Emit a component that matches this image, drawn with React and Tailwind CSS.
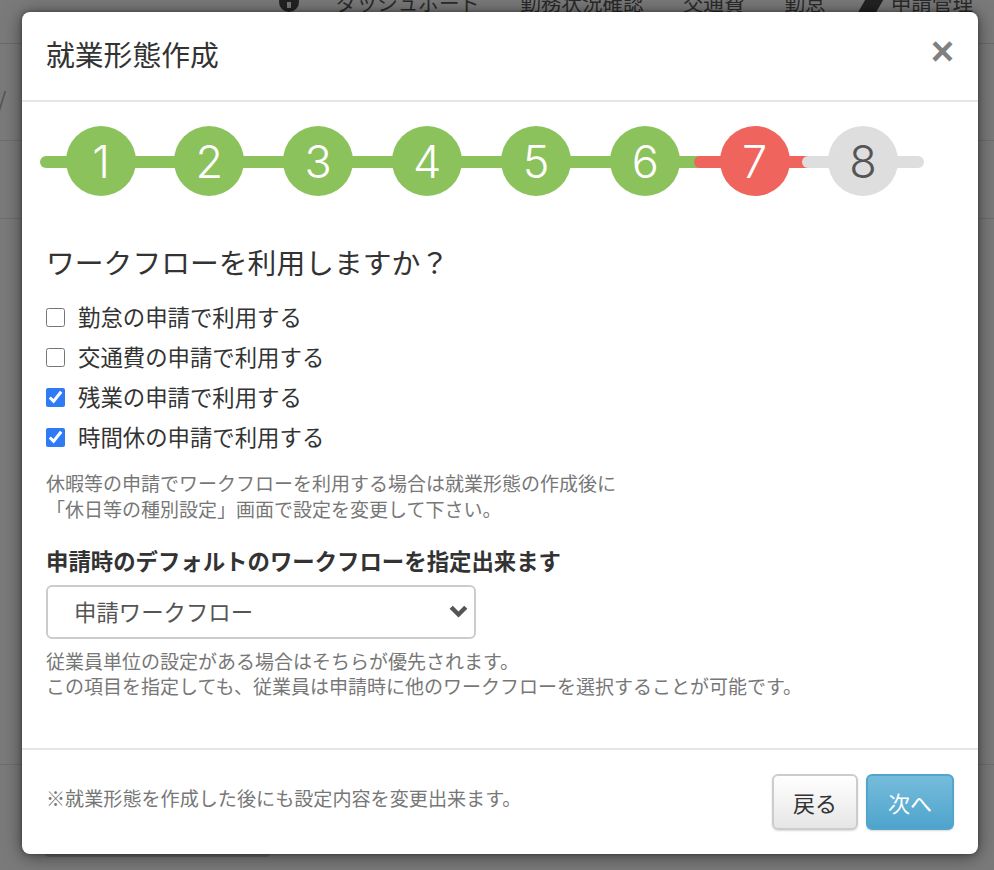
import React from 'react';

const FONT = '"Noto Sans CJK JP", "Noto Sans", sans-serif';

const steps = [
  { n: 1, line: 'bg-[#8cc25c]', circle: 'bg-[#8cc25c] text-white', gap: 'ml-0' },
  { n: 2, line: 'bg-[#8cc25c]', circle: 'bg-[#8cc25c] text-white', gap: '-ml-[13.8px]' },
  { n: 3, line: 'bg-[#8cc25c]', circle: 'bg-[#8cc25c] text-white', gap: '-ml-[13px]' },
  { n: 4, line: 'bg-[#8cc25c]', circle: 'bg-[#8cc25c] text-white', gap: '-ml-[13px]' },
  { n: 5, line: 'bg-[#8cc25c]', circle: 'bg-[#8cc25c] text-white', gap: '-ml-[13px]' },
  { n: 6, line: 'bg-[#8cc25c]', circle: 'bg-[#8cc25c] text-white', gap: '-ml-[13px]' },
  { n: 7, line: 'bg-[#ef645c]', circle: 'bg-[#ef645c] text-white', gap: '-ml-[12.6px]' },
  { n: 8, line: 'bg-[#dedede]', circle: 'bg-[#dedede] text-[#555555]', gap: '-ml-[13.6px]' },
];

const options = [
  { label: '勤怠の申請で利用する', checked: false },
  { label: '交通費の申請で利用する', checked: false },
  { label: '残業の申請で利用する', checked: true },
  { label: '時間休の申請で利用する', checked: true },
];

const Step = ({ n, line, circle, gap }) => (
  <div className={`relative flex h-[70px] w-[122px] shrink-0 items-center justify-center ${gap}`}>
    <div className={`absolute inset-x-0 top-[30px] h-3 rounded-full ${line}`} />
    <div
      className={`relative z-10 flex h-[70px] w-[70px] items-center justify-center rounded-full text-[45px] font-light leading-none ${circle}`}
      style={{ fontFamily: 'Inter, sans-serif' }}
    >
      {n}
    </div>
  </div>
);

const App = () => {
  return (
    <div className="relative h-[870px] w-full overflow-hidden bg-[#7a7a7a]" style={{ fontFamily: FONT }}>
      {/* page behind the dialog */}
      <div className="flex h-[44px] items-start border-b border-[#696969] pl-[279px] text-[20.6px] leading-none text-[#2a2a2a]">
        <div className="-mt-[8px] flex items-center whitespace-nowrap">
          <span className="relative h-[20px] w-[20px] rounded-full bg-[#222222]">
            <span className="absolute bottom-[4px] left-[8px] h-[6px] w-[4px] bg-[#777777]" />
          </span>
          <span className="ml-[37px]">ダッシュボード</span>
          <span className="ml-[40px]">勤務状況確認</span>
          <span className="ml-[39px]">交通費</span>
          <span className="ml-[40px]">勤怠</span>
          <span className="ml-[38px] h-[20px] w-[18px] -skew-x-[30deg] bg-[#222222]" />
          <span className="ml-[9px]">申請管理</span>
        </div>
      </div>
      <div className="-ml-[3px] h-[97px] border-b border-[#6e6e6e] pt-[44px] text-[24px] leading-none text-[#555555]">/</div>
      <div className="h-[78px] border-b border-[#6e6e6e]" />
      <div className="h-[546px] border-b border-[#6e6e6e]" />
      <div className="ml-[45px] mt-[84px] h-[8px] w-[225px] rounded-md bg-[#666666]" />

      {/* dialog */}
      <div className="absolute left-[22px] top-3 flex h-[842px] w-[956px] flex-col rounded-lg bg-white shadow-[0_0_4px_rgba(0,0,0,0.35),0_2px_18px_rgba(0,0,0,0.5)]">
        <div className="flex h-[90px] shrink-0 items-start justify-between border-b-2 border-[#e5e5e5] pl-[24px] pr-[24px]">
          <h1 className="mt-[21px] text-[28.8px] font-normal leading-[42px] text-[#333333]">就業形態作成</h1>
          <span className="mt-[14px] text-[40px] font-bold leading-[50px] text-[#808080]" style={{ fontFamily: '"Liberation Sans", sans-serif' }}>×</span>
        </div>

        <div className="flex-1 pl-[24px]">
          <div className="ml-[-6px] mt-[24px] flex h-[70px]">
            {steps.map((s) => (
              <Step key={s.n} {...s} />
            ))}
          </div>

          <h2 className="mt-[45px] text-[28.8px] font-normal leading-[42px] text-[#333333]">ワークフローを利用しますか？</h2>

          <div className="mt-[14px] flex flex-col">
            {options.map((o) => (
              <label key={o.label} className="flex h-10 items-center text-[22.4px] text-[#333333]">
                <input
                  type="checkbox"
                  defaultChecked={o.checked}
                  className="mr-[13px] h-[19px] w-[19px] accent-[#2f7bf6]"
                />
                {o.label}
              </label>
            ))}
          </div>

          <p className="mt-[13px] text-[19px] leading-[26px] text-[#777777]">
            休暇等の申請でワークフローを利用する場合は就業形態の作成後に
            <br />
            「休日等の種別設定」画面で設定を変更して下さい。
          </p>

          <h3 className="mt-[22px] text-[22.4px] font-bold leading-[32px] text-[#333333]">申請時のデフォルトのワークフローを指定出来ます</h3>

          <div className="relative mt-[9px] w-[430px]">
            <select className="block h-[54px] w-full appearance-none rounded-md border-2 border-[#cccccc] bg-white pl-[26px] text-[22.4px] text-[#555555]">
              <option>申請ワークフロー</option>
            </select>
            <svg className="absolute right-[8px] top-[20px] h-[13px] w-[19px]" viewBox="0 0 19 13" fill="none">
              <path d="M2.2 2.2 9.5 9.5 16.8 2.2" stroke="#555555" strokeWidth="4.4" />
            </svg>
          </div>

          <p className="mt-[9px] text-[19px] leading-[25px] text-[#777777]">
            従業員単位の設定がある場合はそちらが優先されます。
            <br />
            この項目を指定しても、従業員は申請時に他のワークフローを選択することが可能です。
          </p>
        </div>

        <div className="flex h-[106px] shrink-0 items-start justify-between border-t-2 border-[#e5e5e5] pl-[24px] pr-[24px]">
          <p className="mt-[35px] text-[19.1px] leading-[26px] text-[#777777]">※就業形態を作成した後にも設定内容を変更出来ます。</p>
          <div className="mt-[24px] flex gap-2">
            <button className="h-[56px] w-[86px] rounded-md border-2 border-[#cccccc] bg-gradient-to-b from-white to-[#e6e6e6] text-[22px] text-[#333333] shadow-[0_1px_2px_rgba(0,0,0,0.15)]">
              戻る
            </button>
            <button className="h-[56px] w-[88px] rounded-md border-2 border-[#52a6cc] bg-gradient-to-b from-[#75bcdc] to-[#4fa4cc] text-[22px] text-white shadow-[0_1px_2px_rgba(0,0,0,0.15)]">
              次へ
            </button>
          </div>
        </div>
      </div>
    </div>
  );
};

export default App;
